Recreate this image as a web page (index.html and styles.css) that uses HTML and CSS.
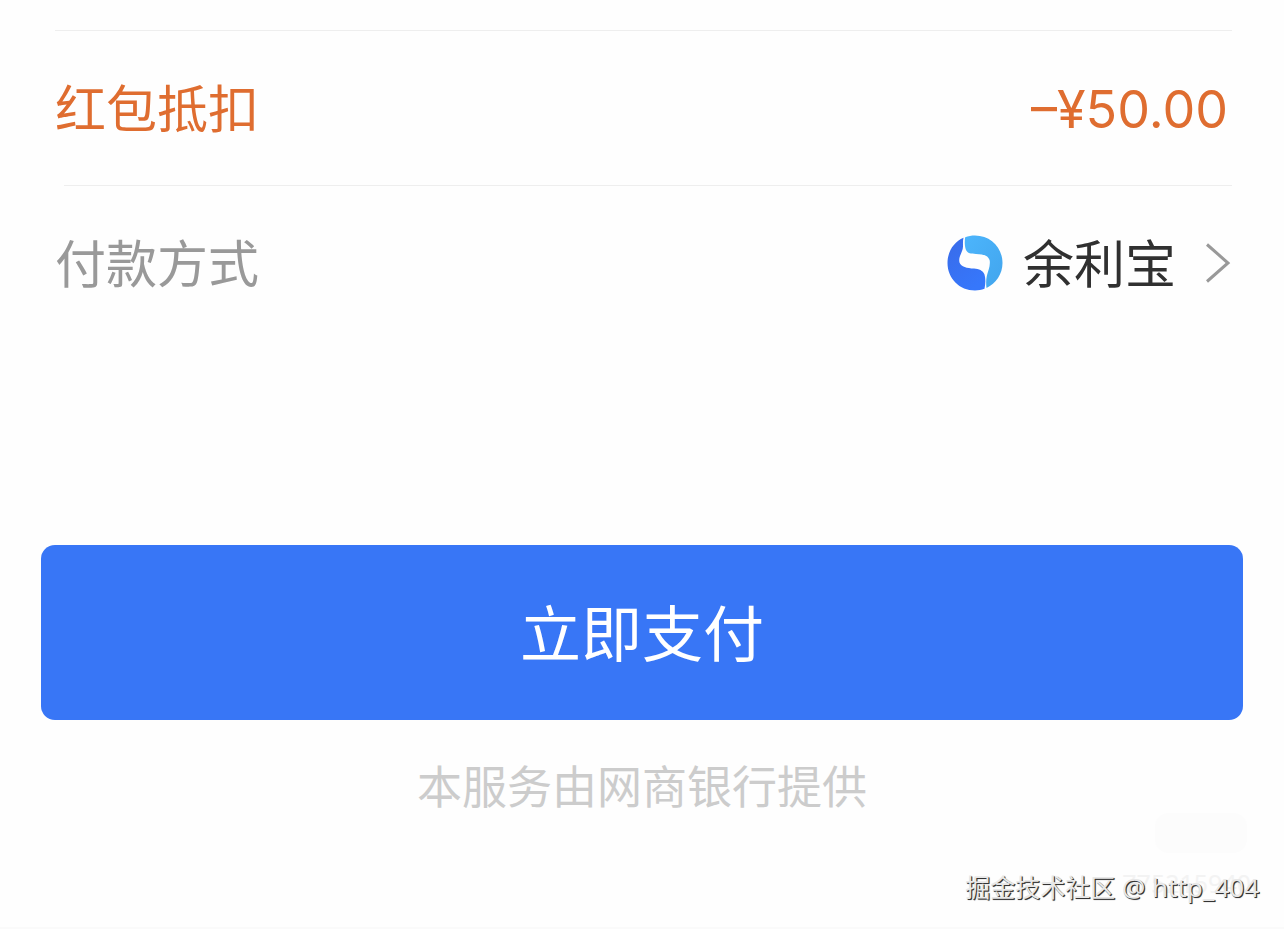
FILE: index.html
```html
<!DOCTYPE html>
<html lang="zh-CN">
<head>
<meta charset="utf-8">
<meta name="viewport" content="width=device-width, initial-scale=1">
<title>付款</title>
<link rel="stylesheet" href="styles.css">
</head>
<body>
<main class="sheet">
  <section class="details">
    <div class="row row-discount">
      <span class="text">红包抵扣</span>
      <span class="amount">–¥50.00</span>
    </div>
    <div class="row row-method">
      <span class="text label">付款方式</span>
      <button class="method" type="button">
        <svg class="logo" viewBox="0 0 56 56" aria-hidden="true">
          <defs>
            <linearGradient id="deep" x1="0" y1="0" x2="0.6" y2="1"><stop offset="0" stop-color="#396be9"/><stop offset="1" stop-color="#3677fb"/></linearGradient>
            <linearGradient id="sky" x1="0" y1="0" x2="1" y2="1"><stop offset="0" stop-color="#4cb5fc"/><stop offset="1" stop-color="#42a5ed"/></linearGradient>
          </defs>
          <path fill="url(#deep)" d="M16.500 2.800C7 6.800 .5 16.500 .5 28C.5 43.500 12.500 55.500 28 55.500C31.500 55.500 34.500 55 37.500 53.800C38.500 49 38.800 44 37.500 39.500C35.800 35.500 32 34 27 33.600C20 33.200 14 32 12.500 27.500C11 21.500 16 17 16 11.500C16 8 15.800 5.500 16.500 2.800Z"/>
          <path fill="url(#sky)" d="M18.200 2.200C17.500 6 17.500 11 19 15C20.500 18.300 24 18.800 29 18.900C36 19 41.500 20.500 42.700 25.500C43.500 31.500 41 36 39.800 41C39 45 39 49 39.500 53C49 48.500 55.500 39 55.500 28C55.500 12.500 43.500 .5 28 .5C24.500 .5 21.200 1 18.200 2.200Z"/>
        </svg>
        <span class="text">余利宝</span>
        <svg class="chevron" viewBox="0 0 26 40" aria-hidden="true"><path d="M1 1.500L22 20L1 38.500" fill="none" stroke="#999" stroke-width="3"/></svg>
      </button>
    </div>
  </section>
  <button class="pay" type="button"><span class="text">立即支付</span></button>
  <p class="provider">本服务由网商银行提供</p>
  <footer class="credit">
    <span class="badge"></span>
    <span class="serial">775215940</span>
    <span class="author">掘金技术社区 <span class="handle">@ http_404</span></span>
  </footer>
</main>
</body>
</html>
```
FILE: styles.css
```css
* {
  box-sizing: border-box;
}

body {
  margin: 0;
  background: #fefefe;
  color: #303030;
  font-family: "Noto Sans CJK SC", sans-serif;
}

button {
  border: 0;
  padding: 0;
  font: inherit;
  color: inherit;
  cursor: pointer;
}

.sheet {
  display: flex;
  flex-direction: column;
  min-height: 100vh;
  padding: 30px 41px 24px;
  border-bottom: 2px solid #fafafa;
}

.details {
  padding: 0 11px 0 14px;
}

.row {
  display: flex;
  align-items: center;
  justify-content: space-between;
  height: 155px;
  font-size: 51px;
  line-height: 76px;
}

.row-discount {
  border-top: 1px solid #eee;
  color: #df6d30;
}

.row-method {
  position: relative;
}

.row-method::before {
  content: "";
  position: absolute;
  top: 0;
  left: 9px;
  right: 0;
  border-top: 1px solid #eee;
}

.text {
  padding-bottom: 4px;
}

.amount {
  padding: 4px 4px 0 0;
  font-family: Inter, "Liberation Sans", sans-serif;
  font-size: 52px;
}

.label {
  color: #999;
}

.method {
  display: flex;
  align-items: center;
  background: none;
}

.logo {
  width: 56px;
  height: 56px;
  margin-right: 20px;
}

.chevron {
  width: 26px;
  height: 40px;
  margin-left: 30px;
}

.pay {
  display: flex;
  align-items: center;
  justify-content: center;
  height: 175px;
  margin-top: 205px;
  border-radius: 14px;
  background: #3876f6;
  color: #fff;
  font-size: 61px;
}

.provider {
  margin: 32px 0 0;
  color: #ccc;
  font-size: 45px;
  line-height: 66px;
  text-align: center;
}

.credit {
  position: relative;
  margin: auto -16px 0 0;
  font-family: "Noto Sans", "Noto Sans CJK SC", sans-serif;
  font-size: 25px;
  line-height: 32px;
  text-align: right;
}

.badge {
  position: absolute;
  right: 12px;
  bottom: 50px;
  width: 92px;
  height: 40px;
  border-radius: 14px;
  background: #fcfcfc;
}

.serial {
  position: absolute;
  right: 8px;
  bottom: 4px;
  color: #f3f3f3;
}

.author {
  position: relative;
  color: #e8e8e8;
  text-shadow: 1px 1px 0 #333, 1px 1px 1px #555;
}

.handle {
  font-size: 26px;
}
```
